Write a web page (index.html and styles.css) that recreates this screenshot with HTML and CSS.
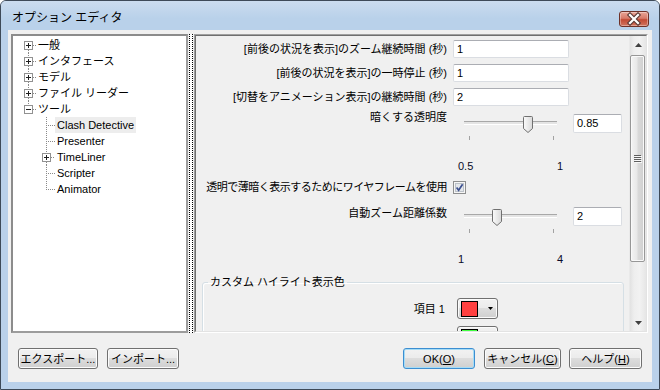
FILE: index.html
```html
<!DOCTYPE html>
<html lang="ja">
<head>
<meta charset="utf-8">
<title>オプション エディタ</title>
<link rel="stylesheet" href="styles.css">
</head>
<body>
<div class="window">
  <div class="titlebar">
    <span class="title">オプション エディタ</span>
    <div class="close">
      <svg width="28" height="14" viewBox="0 0 28 14">
        <path d="M10 3L18 11M18 3L10 11" stroke="#5b3a36" stroke-width="4.4" stroke-linecap="square"/>
        <path d="M10 3L18 11M18 3L10 11" stroke="#fff" stroke-width="2.2" stroke-linecap="square"/>
      </svg>
    </div>
  </div>
  <div class="client">
    <div class="panes">
      <div class="tree">
        <div class="node">
          <svg class="lines" width="23" height="16"><path d="M15.5 13V16M20 8.5H23" stroke="#8a8a8a" stroke-dasharray="1 1"/><rect x="11.5" y="4.5" width="8" height="8" fill="#fff" stroke="#919191"/><path d="M13 8.5H18M15.5 6V11" stroke="#1f1f1f"/></svg>
          <span class="tx">一般</span>
        </div>
        <div class="node">
          <svg class="lines" width="23" height="16"><path d="M15.5 0V4M15.5 13V16M20 8.5H23" stroke="#8a8a8a" stroke-dasharray="1 1"/><rect x="11.5" y="4.5" width="8" height="8" fill="#fff" stroke="#919191"/><path d="M13 8.5H18M15.5 6V11" stroke="#1f1f1f"/></svg>
          <span class="tx">インタフェース</span>
        </div>
        <div class="node">
          <svg class="lines" width="23" height="16"><path d="M15.5 0V4M15.5 13V16M20 8.5H23" stroke="#8a8a8a" stroke-dasharray="1 1"/><rect x="11.5" y="4.5" width="8" height="8" fill="#fff" stroke="#919191"/><path d="M13 8.5H18M15.5 6V11" stroke="#1f1f1f"/></svg>
          <span class="tx">モデル</span>
        </div>
        <div class="node">
          <svg class="lines" width="23" height="16"><path d="M15.5 0V4M15.5 13V16M20 8.5H23" stroke="#8a8a8a" stroke-dasharray="1 1"/><rect x="11.5" y="4.5" width="8" height="8" fill="#fff" stroke="#919191"/><path d="M13 8.5H18M15.5 6V11" stroke="#1f1f1f"/></svg>
          <span class="tx">ファイル リーダー</span>
        </div>
        <div class="node">
          <svg class="lines" width="23" height="16"><path d="M15.5 0V4M20 8.5H23" stroke="#8a8a8a" stroke-dasharray="1 1"/><rect x="11.5" y="4.5" width="8" height="8" fill="#fff" stroke="#919191"/><path d="M13 8.5H18" stroke="#1f1f1f"/></svg>
          <span class="tx">ツール</span>
        </div>
        <div class="node">
          <svg class="lines" width="42" height="16"><path d="M33.5 0V16M35 8.5H42" stroke="#8a8a8a" stroke-dasharray="1 1"/></svg>
          <span class="tx sel">Clash Detective</span>
        </div>
        <div class="node">
          <svg class="lines" width="42" height="16"><path d="M33.5 0V16M35 8.5H42" stroke="#8a8a8a" stroke-dasharray="1 1"/></svg>
          <span class="tx">Presenter</span>
        </div>
        <div class="node">
          <svg class="lines" width="42" height="16"><path d="M33.5 0V4M33.5 13V16M38 8.5H42" stroke="#8a8a8a" stroke-dasharray="1 1"/><rect x="29.5" y="4.5" width="8" height="8" fill="#fff" stroke="#919191"/><path d="M31 8.5H36M33.5 6V11" stroke="#1f1f1f"/></svg>
          <span class="tx">TimeLiner</span>
        </div>
        <div class="node">
          <svg class="lines" width="42" height="16"><path d="M33.5 0V16M35 8.5H42" stroke="#8a8a8a" stroke-dasharray="1 1"/></svg>
          <span class="tx">Scripter</span>
        </div>
        <div class="node">
          <svg class="lines" width="42" height="16"><path d="M33.5 0V9M35 8.5H42" stroke="#8a8a8a" stroke-dasharray="1 1"/></svg>
          <span class="tx">Animator</span>
        </div>
      </div>

      <div class="splitter"></div>

      <div class="settings">
        <div class="settings-inner">
          <div class="settings-body">
            <div class="row">
              <span class="lbl">[前後の状況を表示]のズーム継続時間 (秒)</span>
              <div class="tb wide">1</div>
            </div>
            <div class="row">
              <span class="lbl">[前後の状況を表示]の一時停止 (秒)</span>
              <div class="tb wide">1</div>
            </div>
            <div class="row">
              <span class="lbl">[切替をアニメーション表示]の継続時間 (秒)</span>
              <div class="tb wide">2</div>
            </div>

            <div class="slider-row first">
              <span class="lbl">暗くする透明度</span>
              <div class="slider">
                <div class="track"></div>
                <div class="ticks"><i></i><i></i></div>
                <svg class="thumb" style="left:70px" width="10" height="17"><defs><linearGradient id="tg" x1="0" x2="1" y1="0" y2="0"><stop offset="0" stop-color="#fbfbfb"/><stop offset="1" stop-color="#d9d9d9"/></linearGradient></defs><path d="M.5 1.5Q.5 .5 1.5 .5H8.5Q9.5 .5 9.5 1.5V12.5L5 16.5L.5 12.5Z" fill="url(#tg)" stroke="#707070"/></svg>
              </div>
              <div class="tb num">0.85</div>
            </div>
            <div class="scale"><div class="scale-inner"><span>0.5</span><span>1</span></div></div>

            <div class="check-row">
              <span class="lbl tight">透明で薄暗く表示するためにワイヤフレームを使用</span>
              <svg class="check" width="13" height="13"><rect x=".5" y=".5" width="12" height="12" fill="#f6f6f6" stroke="#8e8f8f"/><rect x="2.5" y="2.5" width="8" height="8" fill="#e4e7eb" stroke="#bcc2c9"/><path d="M3.6 6.6L5.6 9.2L9.6 3.2" stroke="#3d5190" stroke-width="1.7" fill="none"/></svg>
            </div>

            <div class="slider-row second">
              <span class="lbl">自動ズーム距離係数</span>
              <div class="slider">
                <div class="track"></div>
                <div class="ticks"><i></i><i></i></div>
                <svg class="thumb" style="left:39px" width="10" height="17"><path d="M.5 1.5Q.5 .5 1.5 .5H8.5Q9.5 .5 9.5 1.5V12.5L5 16.5L.5 12.5Z" fill="url(#tg)" stroke="#707070"/></svg>
              </div>
              <div class="tb num">2</div>
            </div>
            <div class="scale"><div class="scale-inner"><span>1</span><span>4</span></div></div>

            <fieldset class="group">
              <legend>カスタム ハイライト表示色</legend>
              <div class="item-row">
                <span class="item-lbl">項目 1</span>
                <div class="colorbtn"><span class="swatch red"></span><svg class="dd" width="5" height="3"><path d="M0 0H5L2.5 3Z" fill="#000"/></svg></div>
              </div>
              <div class="item-row">
                <span class="item-lbl"></span>
                <div class="colorbtn"><span class="swatch green"></span><svg class="dd" width="5" height="3"><path d="M0 0H5L2.5 3Z" fill="#000"/></svg></div>
              </div>
            </fieldset>
          </div>

          <div class="vscroll">
            <div class="arrow"><svg width="7" height="4"><path d="M0 4L3.5 0L7 4Z" fill="#404040"/></svg></div>
            <div class="sthumb"><svg width="8" height="8"><path d="M0 .5H7M0 2.5H7M0 4.5H7M0 6.5H7" stroke="#5e5e5e"/><path d="M1 1.5H8M1 3.5H8M1 5.5H8M1 7.5H8" stroke="#f8f8f8"/></svg></div>
            <div class="strack"></div>
            <div class="arrow"><svg width="7" height="4"><path d="M0 0L3.5 4L7 0Z" fill="#404040"/></svg></div>
          </div>
        </div>
      </div>
    </div>

    <div class="footer">
      <div class="btn-group">
        <div class="btn export">エクスポート...</div>
        <div class="btn import">インポート...</div>
      </div>
      <div class="btn-group right">
        <div class="btn ok default">OK(<u>O</u>)</div>
        <div class="btn cancel">キャンセル(<u>C</u>)</div>
        <div class="btn help">ヘルプ(<u>H</u>)</div>
      </div>
    </div>
  </div>
</div>
</body>
</html>
```
FILE: styles.css
```css
* { box-sizing: border-box; }
html, body { margin: 0; padding: 0; }
body {
  width: 660px;
  height: 390px;
  overflow: hidden;
  background: #fff;
  font-family: "Liberation Sans", "Noto Sans CJK JP", sans-serif;
  font-size: 11px;
  color: #000;
}

.window {
  width: 660px;
  height: 390px;
  border: 1px solid #3e4a58;
  border-radius: 6px 6px 0 0;
  background: #bad1ea;
  display: flex;
  flex-direction: column;
  overflow: hidden;
}

.titlebar {
  height: 29px;
  flex: none;
  display: flex;
  justify-content: space-between;
  align-items: flex-start;
  padding: 0 10px 0 11px;
  background: linear-gradient(#cbdcef, #b9d1ea 60%);
}
.title {
  font-size: 12px;
  line-height: 14px;
  margin-top: 10px;
  color: #000;
}
.close {
  margin-top: 10px;
  width: 30px;
  height: 16px;
  border: 1px solid #6e3128;
  border-radius: 3px;
  background: linear-gradient(#e8a597 0%, #d77a69 45%, #c24a34 55%, #d0745f 100%);
  box-shadow: inset 0 0 0 1px rgba(255,255,255,0.35);
  display: flex;
  align-items: center;
  justify-content: center;
}

.client {
  flex: 1;
  margin: 0 7px 7px;
  background: #f0f0f0;
  padding: 4px 4px 0 3px;
  display: flex;
  flex-direction: column;
}

.panes {
  height: 299px;
  flex: none;
  display: flex;
}

/* tree */
.tree {
  width: 177px;
  flex: none;
  background: #fff;
  border: 2px solid;
  border-color: #8c8c8c #9c9c9c #9c9c9c #8c8c8c;
  padding-top: 1px;
}
.node {
  height: 16px;
  display: flex;
  align-items: center;
}
.lines { flex: none; display: block; }
.tx {
  line-height: 16px;
  height: 16px;
  padding: 0 2px;
  white-space: nowrap;
}
.tx.sel { background: #ededed; }

.splitter {
  width: 4px;
  margin: 0 1px;
  flex: none;
  background: #fff;
  border-left: 1px dotted #000;
  border-right: 1px dotted #000;
}

/* settings */
.settings {
  flex: 1;
  border: 1px solid;
  border-color: #a0a0a0 #fff #fff #a0a0a0;
}
.settings-inner {
  height: 100%;
  display: flex;
  border: 1px solid;
  border-color: #6f6f6f #e3e3e3 #e3e3e3 #6f6f6f;
}
.settings-body {
  flex: 1;
  overflow: hidden;
  padding-top: 4px;
}

.lbl {
  width: 251px;
  flex: none;
  text-align: right;
  line-height: 14px;
  white-space: nowrap;
}
.lbl.tight { letter-spacing: -0.5px; }

.row {
  display: flex;
  align-items: center;
  height: 18px;
}
.row + .row { margin-top: 6px; }

.tb {
  background: #fff;
  border: 1px solid #dadde2;
  border-top-color: #abadb3;
  border-radius: 2px;
  padding-left: 3px;
  margin-left: 6px;
}
.tb.wide { width: 116px; height: 18px; line-height: 16px; }
.tb.num { width: 49px; height: 19px; line-height: 17px; }

.slider-row {
  display: flex;
  align-items: flex-start;
}
.slider-row.first { margin-top: 4px; height: 31px; }
.slider-row.first .slider { margin-top: 6px; }
.slider-row.first .tb { margin-top: 4px; }
.slider-row.second { margin-top: 12px; height: 27px; }
.slider-row.second .slider { margin-top: 3px; }
.slider-row.second .tb { margin-top: 1px; }

.slider {
  position: relative;
  width: 114px;
  height: 25px;
  margin-left: 6px;
  flex: none;
}
.track {
  margin: 5px 10px 0 11px;
  height: 4px;
  border-top: 1px solid #a8a8a8;
  border-bottom: 1px solid #fff;
  background: #e4e4e4;
}
.ticks {
  margin: 11px 0 0 16px;
  width: 85px;
  height: 4px;
  display: flex;
  justify-content: space-between;
}
.ticks i {
  display: block;
  width: 1px;
  height: 4px;
  background: #a2a2a2;
}
.thumb {
  position: absolute;
  top: 0;
  display: block;
}

.scale {
  height: 14px;
  padding-left: 262px;
}
.slider-row.first + .scale { margin-top: 18px; }
.slider-row.second + .scale { margin-top: 19px; }
.scale-inner {
  width: 105px;
  display: flex;
  justify-content: space-between;
  line-height: 14px;
  color: #0a0a28;
}

.check-row {
  margin-top: 7px;
  height: 14px;
  display: flex;
  align-items: flex-start;
}
.check {
  display: block;
  margin: 1px 0 0 6px;
  flex: none;
}

/* group box */
.group {
  margin: 9px 5px 0 6px;
  padding: 0;
  border: 1px solid #d5dfe5;
  border-radius: 3px;
  box-shadow: inset 1px 1px 0 #fff;
  min-width: 0;
}
.group legend {
  margin-left: 5px;
  padding: 0 2px;
  line-height: 14px;
}
.item-row {
  display: flex;
  align-items: center;
  height: 21px;
  margin-top: 9px;
}
.item-row + .item-row { margin-top: 7px; }
.item-lbl {
  width: 242px;
  text-align: right;
  line-height: 14px;
  flex: none;
}
.colorbtn {
  margin-left: 12px;
  width: 41px;
  height: 21px;
  flex: none;
  border: 1px solid #707070;
  border-radius: 3px;
  background: linear-gradient(#f2f2f2 0%, #ebebeb 50%, #dddddd 50%, #cfcfcf 100%);
  box-shadow: inset 0 0 0 1px #fbfbfb;
  display: flex;
  align-items: center;
  padding-left: 3px;
}
.swatch {
  width: 17px;
  height: 16px;
  border: 1px solid #000;
  flex: none;
}
.swatch.red { background: #ff4040; }
.swatch.green { background: #40ff40; }
.dd { display: block; margin-left: 10px; }

/* scrollbar */
.vscroll {
  width: 17px;
  flex: none;
  display: flex;
  flex-direction: column;
  background: linear-gradient(to right, #e2e2e2, #eeeeee 25%, #f2f2f2 60%, #e6e6e6);
  border-left: 1px solid #e9e9e9;
}
.arrow {
  height: 17px;
  flex: none;
  display: flex;
  align-items: center;
  justify-content: center;
}
.sthumb {
  margin-top: 2px;
  width: 15px;
  height: 207px;
  flex: none;
  border: 1px solid #979797;
  border-radius: 2px;
  background: linear-gradient(to right, #f4f4f4, #e8e8e8 45%, #d9d9d9 55%, #cfcfcf);
  box-shadow: inset 0 0 0 1px #f9f9f9;
  display: flex;
  align-items: center;
  justify-content: center;
}
.strack { flex: 1; }

/* footer */
.footer {
  margin-top: 15px;
  display: flex;
  justify-content: space-between;
  padding: 0 6px 0 7px;
}
.btn-group { display: flex; gap: 9px; }
.btn-group.right .help { margin-left: -1px; }
.btn {
  height: 21px;
  border: 1px solid #707070;
  border-radius: 3px;
  background: linear-gradient(#f2f2f2 0%, #ebebeb 50%, #dddddd 50%, #cfcfcf 100%);
  box-shadow: inset 0 0 0 1px #fcfcfc;
  display: flex;
  align-items: center;
  justify-content: center;
  line-height: 14px;
  white-space: nowrap;
}
.btn u { text-underline-offset: 1px; }
.btn.export { width: 80px; }
.btn.import { width: 72px; }
.btn.ok { width: 72px; }
.btn.cancel { width: 77px; }
.btn.help { width: 73px; }
.btn.default {
  border-color: #3c8ed1;
  box-shadow: inset 0 0 0 1px #a6dcf6;
}
```
